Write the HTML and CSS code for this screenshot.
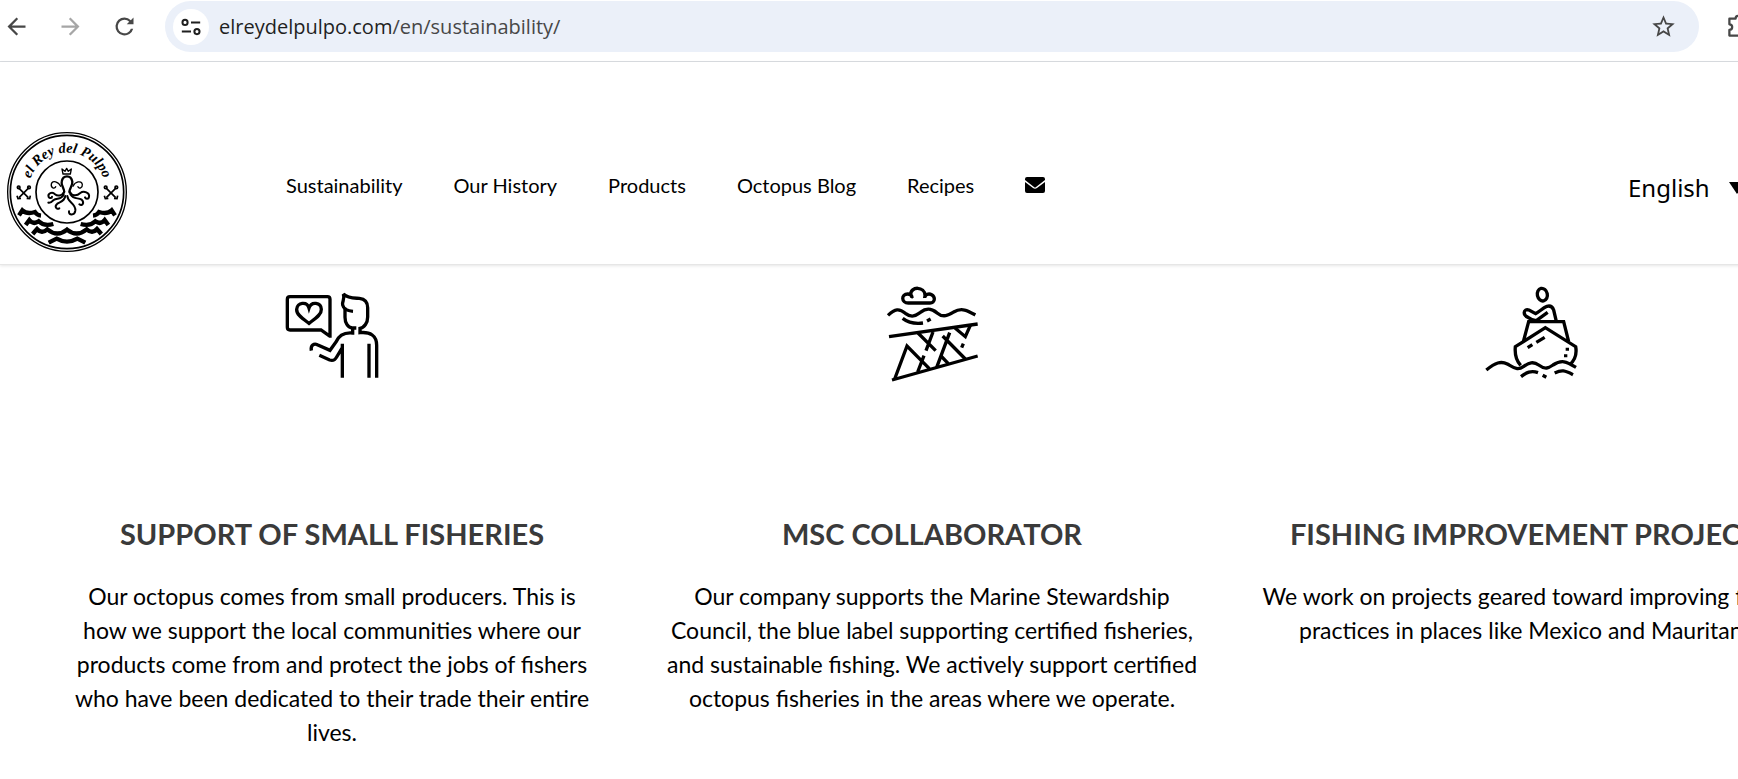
FILE: index.html
```html
<!DOCTYPE html>
<html lang="en">
<head>
  <meta charset="UTF-8">
  <meta name="viewport" content="width=device-width, initial-scale=1.0">
  <title>Sustainability - El Rey del Pulpo</title>
  <link rel="stylesheet" href="styles.css">
</head>
<body>
  <!-- Browser bar -->
  <div class="toolbar">
    <button class="tool-btn" aria-label="Back">
      <svg viewBox="0 0 24 24"><path d="M20 11H7.83l5.59-5.59L12 4l-8 8 8 8 1.41-1.41L7.83 13H20z"/></svg>
    </button>
    <button class="tool-btn disabled" aria-label="Forward" disabled>
      <svg viewBox="0 0 24 24"><path d="M4 13h12.17l-5.59 5.59L12 20l8-8-8-8-1.41 1.41L16.17 11H4z"/></svg>
    </button>
    <button class="tool-btn" aria-label="Reload">
      <svg viewBox="0 0 24 24"><path d="M17.65 6.35A7.96 7.96 0 0 0 12 4a8 8 0 1 0 7.73 10h-2.08A6 6 0 1 1 12 6c1.66 0 3.14.69 4.22 1.78L14 10h6V4z"/></svg>
    </button>
    <div class="address">
      <button class="site-info" aria-label="Site information">
        <svg viewBox="0 0 24 24" fill="none" stroke="#1f1f1f" stroke-width="2.2">
          <circle cx="5.500" cy="7" r="2.8"/><path d="M12 7h10M2 17h10"/><circle cx="18.500" cy="17" r="2.8"/>
        </svg>
      </button>
      <a class="url" href="#">elreydelpulpo.com<span>/en/sustainability/</span></a>
      <button class="tool-btn" aria-label="Bookmark">
        <svg viewBox="0 0 24 24"><path d="M22 9.24l-7.19-.62L12 2 9.19 8.63 2 9.24l5.46 4.73L5.82 21 12 17.27 18.18 21l-1.63-7.03zM12 15.4l-3.76 2.27 1-4.28-3.32-2.88 4.38-.38L12 6.1l1.71 4.04 4.38.38-3.32 2.88 1 4.28z"/></svg>
      </button>
    </div>
    <button class="tool-btn" aria-label="Extensions">
      <svg viewBox="0 0 24 24"><path d="M3 5h5.500a2.500 2.500 0 0 1 5 0H19v5a2.500 2.500 0 0 1 0 5v5H3v-5a2.500 2.500 0 0 0 0-5z" fill="none" stroke="#474747" stroke-width="2" stroke-linejoin="round"/></svg>
    </button>
  </div>

  <!-- Site header -->
  <header class="header">
    <a class="logo" href="#" aria-label="El Rey del Pulpo">
      <svg viewBox="0 0 405 405">
        <defs><path id="arc" d="M87 220A116 116 0 1 1 315 220"/></defs>
        <g fill="none" stroke="#000">
          <circle cx="201" cy="201" r="178" stroke-width="4"/>
          <circle cx="201" cy="201" r="170" stroke-width="5"/>
          <circle cx="201" cy="201" r="93" stroke-width="5"/>
          <!-- hooks -->
          <g stroke-width="5">
            <path d="M55 188l30 30M87 188l-30 30"/>
            <circle cx="56" cy="187" r="4"/><circle cx="87" cy="187" r="4"/>
            <path d="M51 212l3 9 9-1M80 220l9 1 2-9"/>
            <path d="M317 188l30 30M349 188l-30 30"/>
            <circle cx="317" cy="187" r="4"/><circle cx="349" cy="187" r="4"/>
            <path d="M313 212l3 9 9-1M342 220l9 1 2-9"/>
          </g>
          <!-- octopus -->
          <path stroke-width="4" stroke-linejoin="round" d="M189 147l-3-15 9 7 5-9 5 9 9-7-3 15z"/>
          <g stroke-width="6" stroke-linecap="round">
            <path d="M192 203c4-10-10-20-7-33 2-11 9-16 16-16s14 5 16 16c2 13-12 23-8 33" stroke-width="7"/>
            <path d="M193 200c-8 14-21 14-28 8-8-10-23-3-19 8 3 5 10 4 10-1"/>
            <path d="M209 200c8 14 21 14 32 4 10-8 29-1 26 12-1 7-10 7-12 1"/>
            <path d="M182 184c-6-14-25-20-28-7-2 12 10 16 13 8" stroke-width="4"/>
            <path d="M219 184c6-14 25-19 28-6 1 11-10 15-13 7" stroke-width="4"/>
            <path d="M191 209c-9 16-20 9-30 16-6 6-12 10-16 8"/>
            <path d="M196 213c-3 17-15 17-24 23-10 8-3 19 6 14"/>
            <path d="M202 213c1 20 26 22 24 44-2 15-21 15-19 2"/>
            <path d="M211 208c11 18 23 8 34 16 9 9 2 21-7 14"/>
          </g>
          <!-- waves -->
          <g stroke-width="13">
            <path d="M57 271l10-15q14 13 38 5 6 10 18 11M345 271l-10-15q-14 13-38 5-6 10-18 11"/>
            <path d="M77 300l11-15q12 15 28 4 16 16 44 8M325 300l-11-15q-12 15-28 4-16 16-44 8"/>
            <path d="M98 327l13-15q14 16 31 1 30 25 59 1 29 24 59-1 17 15 31-1l13 15"/>
            <path d="M146 353l24-12q31 18 62 0l24 12"/>
          </g>
        </g>
        <text class="logo-text"><textPath href="#arc" startOffset="50%" text-anchor="middle">el Rey del Pulpo</textPath></text>
      </svg>
    </a>
    <nav class="nav">
      <a href="#">Sustainability</a>
      <a href="#">Our History</a>
      <a href="#">Products</a>
      <a href="#">Octopus Blog</a>
      <a href="#">Recipes</a>
      <a href="#" class="mail" aria-label="Contact">
        <svg viewBox="0 0 20 16"><path d="M2 0h16a2 2 0 0 1 2 2v1l-9 7q-1 1-2 0L0 3V2a2 2 0 0 1 2-2zM0 5l8 6q2 1.500 4 0l8-6v9a2 2 0 0 1-2 2H2a2 2 0 0 1-2-2z"/></svg>
      </a>
    </nav>
    <div class="lang">
      <select aria-label="Language">
        <option>English</option>
        <option>Español</option>
      </select>
      <svg viewBox="0 0 16 12"><path d="M0 0h16L8 12z"/></svg>
    </div>
  </header>

  <main class="features">
    <section class="feature">
      <svg class="feature-icon" viewBox="6 0 360 330">
        <path d="M180 168V58q0-8-8-8H60q-8 0-8 8v84q0 8 8 8h93l26 18z"/>
        <path d="M117 130C98 116 79 104 80 88c1-21 31-25 37-4 7-21 36-17 37 4 1 16-19 28-37 42z"/>
        <path d="M249 94c-12-1-28-5-31-19-3-11 8-16 2-33 15 14 34 12 48 13 17 2 25 13 25 28v28c0 17-10 32-23 34v13c31-3 50 9 50 38v97"/>
        <path d="M225 83v29c0 16 8 30 21 32h13M248 144v15c-30-3-44 13-50 27l-18 25-38-17c-10-5-21 2-18 18"/>
        <path d="M148 226l31 14c13 4 17-2 21-9l17-28M217 191v102M297 191v102"/>
      </svg>
      <h2>SUPPORT OF SMALL FISHERIES</h2>
      <p>Our octopus comes from small producers. This is<br>how we support the local communities where our products come from and protect the jobs of fishers who have been dedicated to their trade their entire lives.</p>
    </section>
    <section class="feature">
      <svg class="feature-icon" viewBox="-9 0 360 330">
        <path d="M100 69c-22 0-22-27-2-27 3 0 7 1 9 3-1-28 43-26 43 1 16-10 28 1 28 11 0 8-6 12-13 12zM111 54c0-7-2-9-7-10M149 54c0-5 2-8 6-10"/>
        <path d="M39 106c21-20 34-21 52-6 21 16 33 5 45-3 20-15 34-11 49 1 20 17 36 7 51-2 25-15 44-3 65 9"/>
        <path d="M83 115c19 15 38 17 61 14M156 123l11-6M42 170l266-38M51 300l257-72"/>
        <path d="M59 297l37-99 67 68M128 276l19-49M129 159l53 53M174 156l-21 56M203 168l68 69M224 158l-39 104M198 228l22 23M240 144l31 26 15-34M265 191l-5 12"/>
      </svg>
      <h2>MSC COLLABORATOR</h2>
      <p>Our company supports the Marine Stewardship Council, the blue label supporting certified fisheries, and sustainable fishing. We actively support certified octopus fisheries in the areas where we operate.</p>
    </section>
    <section class="feature">
      <svg class="feature-icon" viewBox="-9 0 360 330">
        <ellipse cx="202" cy="44" rx="15" ry="19" transform="rotate(-12 202 44)"/>
        <path d="M218 97l-34 25c-9 0-18-5-25-10-16-6-15-27 3-22l20 11c12-7 22-17 34-22 11-3 17 3 20 11l8 34"/>
        <path d="M145 185l16-60h105l15 60M137 256c-12-13-18-34-16-56l90-57 91 57c4 22-3 41-18 54"/>
        <path d="M158 203l14-9M184 187l25-15M277 203v9M272 223v9"/>
        <path d="M34 270c27-22 44-28 63-18 18 10 30 21 48 8 17-12 30-17 46-5 20 15 30 9 43 0 26-17 39-11 69 7"/>
        <path d="M138 290c16-12 30-20 51-12M203 286l11 6M239 279c21-10 30-8 55 5"/>
      </svg>
      <h2>FISHING IMPROVEMENT PROJECTS</h2>
      <p>We work on projects geared toward improving fishing practices in places like Mexico and Mauritania.</p>
    </section>
  </main>
</body>
</html>
```

FILE: styles.css
```css
* {
  box-sizing: border-box;
}
body {
  margin: 0;
  font-family: Lato, "Liberation Sans", sans-serif;
  background: #fff;
  color: #000;
  overflow-x: hidden;
}
button {
  border: none;
  background: none;
  padding: 0;
  cursor: pointer;
}
a {
  color: inherit;
  text-decoration: none;
}
svg {
  display: block;
}

/* Browser bar */
.toolbar {
  display: flex;
  align-items: center;
  gap: 27px;
  margin-right: -15px;
  padding: 1px 0 9px 3px;
  border-bottom: 1px solid #dadde1;
}
.tool-btn {
  flex: none;
}
.tool-btn svg {
  width: 27px;
  height: 27px;
  fill: #474747;
}
.tool-btn.disabled svg {
  fill: #a6a6a6;
}
.address {
  flex: 1;
  display: flex;
  align-items: center;
  height: 51px;
  padding: 0 22px 0 8px;
  border-radius: 26px;
  background: #ebf0f9;
}
.site-info {
  display: flex;
  align-items: center;
  justify-content: center;
  width: 36px;
  height: 36px;
  border-radius: 50%;
  background: #fff;
}
.site-info svg {
  width: 22px;
  height: 22px;
}
.url {
  flex: 1;
  margin-left: 10px;
  font-family: "Open Sans", "Noto Sans", sans-serif;
  font-size: 20px;
  color: #1f1f1f;
}
.url span {
  color: #474747;
}

/* Site header */
.header {
  display: flex;
  align-items: center;
  margin-right: -7px;
  padding: 63px 0 4px;
  border-bottom: 1px solid #e6e6e6;
  box-shadow: 0 1px 3px rgba(0, 0, 0, 0.1);
}
.logo svg {
  width: 135px;
  height: 135px;
}
.logo-text {
  font-family: "Liberation Serif", serif;
  font-size: 43px;
  font-weight: bold;
  font-style: italic;
}
.nav {
  display: flex;
  align-items: center;
  gap: 51px;
  margin-left: 151px;
  padding-bottom: 16px;
  font-size: 20px;
}
.mail svg {
  width: 20px;
  height: 16px;
}
.lang {
  display: flex;
  align-items: center;
  gap: 12px;
  margin-left: auto;
  padding-bottom: 10px;
}
.lang select {
  appearance: none;
  border: none;
  background: none;
  padding: 0;
  font-family: "Noto Sans", sans-serif;
  font-size: 24px;
  color: #000;
}
.lang svg {
  width: 16px;
  height: 12px;
}

/* Three columns, the row runs past the right edge */
.features {
  display: grid;
  grid-template-columns: repeat(3, 1fr);
  gap: 60px;
  margin: 15px -64px 0 62px;
  text-align: center;
}
.feature-icon {
  width: 120px;
  height: 110px;
  margin: 0 auto;
  fill: none;
  stroke: #000;
  stroke-width: 10;
}
.feature h2 {
  margin: 124px 0 25px;
  font-size: 29px;
  line-height: 40px;
  font-weight: bold;
  color: #3a3a3a;
  white-space: nowrap;
}
.feature p {
  margin: 0;
  font-size: 23px;
  line-height: 34px;
}
```
